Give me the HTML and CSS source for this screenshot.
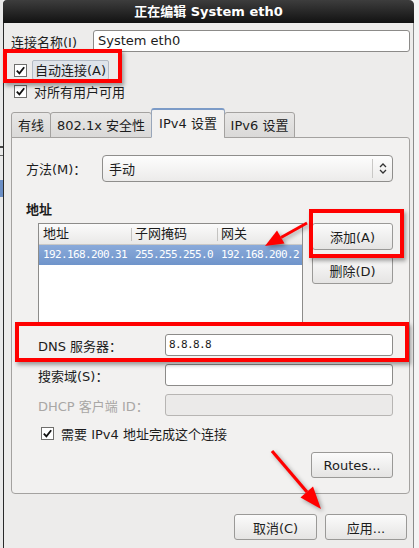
FILE: index.html
```html
<!DOCTYPE html>
<html>
<head>
<meta charset="utf-8">
<link rel="stylesheet" href="styles.css">
</head>
<body>
<div class="screen">
  <div class="bgwin"></div>
  <div class="dialog">
    <div class="titlebar">正在编辑 System eth0</div>
    <div class="content">
      <div class="name-row">
        <span class="name-lbl">连接名称(I)</span>
        <div class="entry grow">System eth0</div>
      </div>
      <div class="check-row auto-row">
        <svg class="cb" width="13" height="13" viewBox="0 0 13 13"><rect x="0.5" y="0.5" width="12" height="12" fill="#fff" stroke="#6f6e6c"/><path d="M2.8 6.6 L5.4 9.4 L10.2 3.2" fill="none" stroke="#111" stroke-width="1.8"/></svg>
        <span class="focus-lbl">自动连接(A)</span>
      </div>
      <div class="check-row users-row">
        <svg class="cb" width="13" height="13" viewBox="0 0 13 13"><rect x="0.5" y="0.5" width="12" height="12" fill="#fff" stroke="#6f6e6c"/><path d="M2.8 6.6 L5.4 9.4 L10.2 3.2" fill="none" stroke="#111" stroke-width="1.8"/></svg>
        <span class="cb-lbl">对所有用户可用</span>
      </div>
      <div class="tabs">
        <div class="tab t1">有线</div>
        <div class="tab t2">802.1x 安全性</div>
        <div class="tab t3 active">IPv4 设置</div>
        <div class="tab t4">IPv6 设置</div>
      </div>
      <div class="page">
        <div class="method-row">
          <span class="method-lbl">方法(M)：</span>
          <div class="combo">
            <span class="combo-text">手动</span>
            <span class="combo-sep"></span>
            <svg class="combo-arrows" width="8" height="13" viewBox="0 0 8 13"><path d="M1 5 L4 2 L7 5 M1 8 L4 11 L7 8" fill="none" stroke="#333" stroke-width="1.3"/></svg>
          </div>
        </div>
        <div class="heading">地址</div>
        <div class="addr-area">
          <div class="table">
            <div class="thead">
              <div class="th c1">地址</div>
              <div class="th c2">子网掩码</div>
              <div class="th c3">网关</div>
            </div>
            <div class="trow sel">
              <div class="td c1">192.168.200.31</div>
              <div class="td c2">255.255.255.0</div>
              <div class="td c3">192.168.200.2</div>
            </div>
          </div>
          <div class="side-btns">
            <button class="btn add-btn">添加(A)</button>
            <button class="btn del-btn">删除(D)</button>
          </div>
        </div>
        <div class="field-row first">
          <span class="field-lbl">DNS 服务器：</span>
          <div class="entry grow mono">8.8.8.8</div>
        </div>
        <div class="field-row">
          <span class="field-lbl">搜索域(S)：</span>
          <div class="entry grow"></div>
        </div>
        <div class="field-row">
          <span class="field-lbl disabled">DHCP 客户端 ID：</span>
          <div class="entry grow entry-disabled"></div>
        </div>
        <div class="check-row req-row">
          <svg class="cb" width="13" height="13" viewBox="0 0 13 13"><rect x="0.5" y="0.5" width="12" height="12" fill="#fff" stroke="#6f6e6c"/><path d="M2.8 6.6 L5.4 9.4 L10.2 3.2" fill="none" stroke="#111" stroke-width="1.8"/></svg>
          <span class="cb-lbl">需要 IPv4 地址完成这个连接</span>
        </div>
        <div class="routes-row">
          <button class="btn routes-btn">Routes...</button>
        </div>
      </div>
      <div class="footer">
        <button class="btn cancel-btn">取消(C)</button>
        <button class="btn apply-btn">应用...</button>
      </div>
    </div>
  </div>
</div>

<div class="redbox rb1"></div>
<div class="redbox rb2"></div>
<div class="redbox rb3"></div>
<svg class="arrows" width="419" height="548" viewBox="0 0 419 548">
  <line x1="307" y1="223" x2="281" y2="237.5" stroke="#f00" stroke-width="3"/>
  <polygon points="265,246 284.5,243.5 277,230.5" fill="#f00"/>
  <line x1="272" y1="451" x2="307" y2="492" stroke="#f00" stroke-width="3.2"/>
  <polygon points="321,509 300.5,497.5 313,486.5" fill="#f00"/>
</svg>
</body>
</html>
```

FILE: styles.css
```css
* { box-sizing: border-box; }
html, body { margin: 0; padding: 0; }
body {
  width: 419px;
  height: 548px;
  overflow: hidden;
  background: #f4f4f4;
  font-family: "DejaVu Sans", "Noto Sans CJK SC", sans-serif;
  font-size: 13px;
  color: #1c1c1c;
  position: relative;
}
.screen {
  display: flex;
  height: 548px;
}
.bgwin {
  width: 3px;
  height: 548px;
  background:
    linear-gradient(to bottom,
      #e9e9e9 0, #e9e9e9 146px, #444 146px, #444 148px,
      #e9e9e9 148px, #e9e9e9 155px, #666 155px, #666 156px,
      #e9e9e9 156px, #e9e9e9 180px, #6c8fc6 180px, #6c8fc6 197px,
      #e9e9e9 197px, #e9e9e9 548px);
}
.dialog {
  width: 411px;
  height: 548px;
  background: #edeceb;
  border-left: 1px solid #2a2a2a;
  border-right: 1px solid #8a8a8a;
  display: flex;
  flex-direction: column;
  border-radius: 5px 5px 0 0;
}
.titlebar {
  height: 23px;
  line-height: 23px;
  background: linear-gradient(#3d3d3d, #121212);
  color: #fff;
  font-weight: bold;
  text-align: center;
  border-radius: 4px 5px 0 0;
  margin: 0 -1px;
}
.content {
  padding: 0 3px 0 7px;
  display: flex;
  flex-direction: column;
}
.name-row {
  margin-top: 7px;
  height: 22px;
  display: flex;
  align-items: center;
}
.name-lbl { width: 82px; }
.grow { flex: 1; }
.entry {
  height: 22px;
  line-height: 20px;
  background: #fff;
  border: 1px solid #8c8b89;
  border-radius: 3px;
  padding: 0 4px;
  white-space: nowrap;
}
.entry-disabled {
  background: #ebeae9;
  border-color: #b7b5b3;
}
.mono {
  font-family: "DejaVu Sans Mono", monospace;
  font-size: 11px;
  letter-spacing: -0.62px;
  padding-left: 3px;
}
.check-row {
  display: flex;
  align-items: center;
}
.cb { flex: none; display: block; }
.auto-row {
  margin-top: 8px;
  height: 20px;
  padding-left: 3px;
}
.focus-lbl {
  margin-left: 5px;
  height: 20px;
  line-height: 19px;
  padding: 0 2px;
  background: #dfe4ea;
  border: 1px solid #b3bac4;
  border-radius: 2px;
}
.users-row {
  margin-top: 3px;
  height: 17px;
  padding-left: 3px;
}
.cb-lbl { margin-left: 7px; }
.tabs {
  margin-top: 8px;
  height: 30px;
  display: flex;
  align-items: flex-end;
  position: relative;
  z-index: 1;
  margin-bottom: -1px;
}
.tab {
  height: 26px;
  line-height: 25px;
  background: linear-gradient(#e8e7e6, #dad9d8);
  border: 1px solid #a4a2a0;
  border-bottom: 1px solid #a4a2a0;
  border-radius: 3px 3px 0 0;
  text-align: center;
  white-space: nowrap;
}
.t1 { width: 40px; }
.t2 { width: 102px; margin-left: -1px; }
.t3 { width: 74px; margin-left: -1px; }
.t4 { width: 71px; margin-left: -1px; }
.tab.active {
  height: 30px;
  line-height: 27px;
  background: #f2f1f0;
  border-color: #98a6ba;
  border-top: 2px solid #7c9bc7;
  border-bottom: 1px solid #f2f1f0;
}
.page {
  height: 357px;
  background: #f2f1f0;
  border: 1px solid #a4a2a0;
  border-radius: 0 3px 4px 4px;
  padding: 17px 16px 0 14px;
  display: flex;
  flex-direction: column;
}
.method-row {
  height: 27px;
  display: flex;
  align-items: center;
}
.method-lbl { width: 76px; }
.combo {
  flex: 1;
  height: 27px;
  border: 1px solid #8f8e8c;
  border-radius: 4px;
  background: linear-gradient(#fdfdfd, #ecebea);
  display: flex;
  align-items: center;
  padding-left: 6px;
}
.combo-text { flex: 1; }
.combo-sep {
  width: 1px;
  height: 19px;
  background: #c9c8c6;
  margin-right: 6px;
}
.combo-arrows { margin-right: 5px; }
.heading {
  margin-top: 20px;
  height: 16px;
  line-height: 16px;
  font-weight: bold;
}
.addr-area {
  margin-top: 5px;
  display: flex;
  padding-left: 12px;
}
.table {
  width: 265px;
  height: 103px;
  background: #fff;
  border: 1px solid #8d8c8a;
}
.thead {
  height: 21px;
  display: flex;
  background: linear-gradient(#fbfbfb, #e9e8e7);
  border-bottom: 1px solid #c9c8c6;
}
.th {
  line-height: 20px;
  padding-left: 4px;
  position: relative;
}
.th.c2::before, .th.c3::before {
  content: "";
  position: absolute;
  left: 0;
  top: 4px;
  width: 1px;
  height: 13px;
  background: #c4c3c1;
}
.c1 { width: 92px; }
.c2 { width: 86px; }
.c3 { flex: 1; }
.trow {
  height: 20px;
  display: flex;
}
.trow.sel {
  background: linear-gradient(#8aaada, #6f94ca);
  color: #fff;
}
.td {
  line-height: 20px;
  padding-left: 4px;
  font-family: "DejaVu Sans Mono", monospace;
  font-size: 11px;
  letter-spacing: -0.62px;
  white-space: nowrap;
}
.side-btns {
  margin-left: 9px;
  display: flex;
  flex-direction: column;
  gap: 6px;
}
.btn {
  font-family: "DejaVu Sans", "Noto Sans CJK SC", sans-serif;
  font-size: 13px;
  color: #1c1c1c;
  background: linear-gradient(#fbfbfb, #e5e4e3);
  border: 1px solid #9a9997;
  border-radius: 3px;
  padding: 0;
  margin: 0;
  height: 27px;
}
.add-btn, .del-btn { width: 81px; }
.del-btn { height: 28px; }
.field-row {
  margin-top: 8px;
  height: 22px;
  display: flex;
  align-items: center;
}
.field-row.first { margin-top: 8px; }
.field-lbl {
  width: 139px;
  padding-left: 12px;
  white-space: nowrap;
}
.field-lbl.disabled { color: #a9a7a5; }
.req-row {
  margin-top: 10px;
  height: 14px;
  padding-left: 15px;
}
.routes-row {
  margin-top: 12px;
  display: flex;
  justify-content: flex-end;
}
.routes-btn { width: 82px; height: 26px; }
.footer {
  margin-top: 20px;
  display: flex;
  justify-content: flex-end;
  gap: 8px;
  padding-right: 3px;
}
.cancel-btn { width: 83px; height: 26px; }
.apply-btn { width: 82px; height: 26px; }
.redbox {
  position: absolute;
  border: 4px solid #ff0000;
  box-shadow: 2px 3px 4px rgba(0, 0, 0, 0.35);
}
.rb1 { left: 3px; top: 49px; width: 119px; height: 34px; }
.rb2 { left: 309px; top: 209px; width: 95px; height: 49px; }
.rb3 { left: 15px; top: 322px; width: 394px; height: 40px; }
.arrows {
  position: absolute;
  left: 0;
  top: 0;
  filter: drop-shadow(2px 2px 2px rgba(0, 0, 0, 0.35));
}
```
